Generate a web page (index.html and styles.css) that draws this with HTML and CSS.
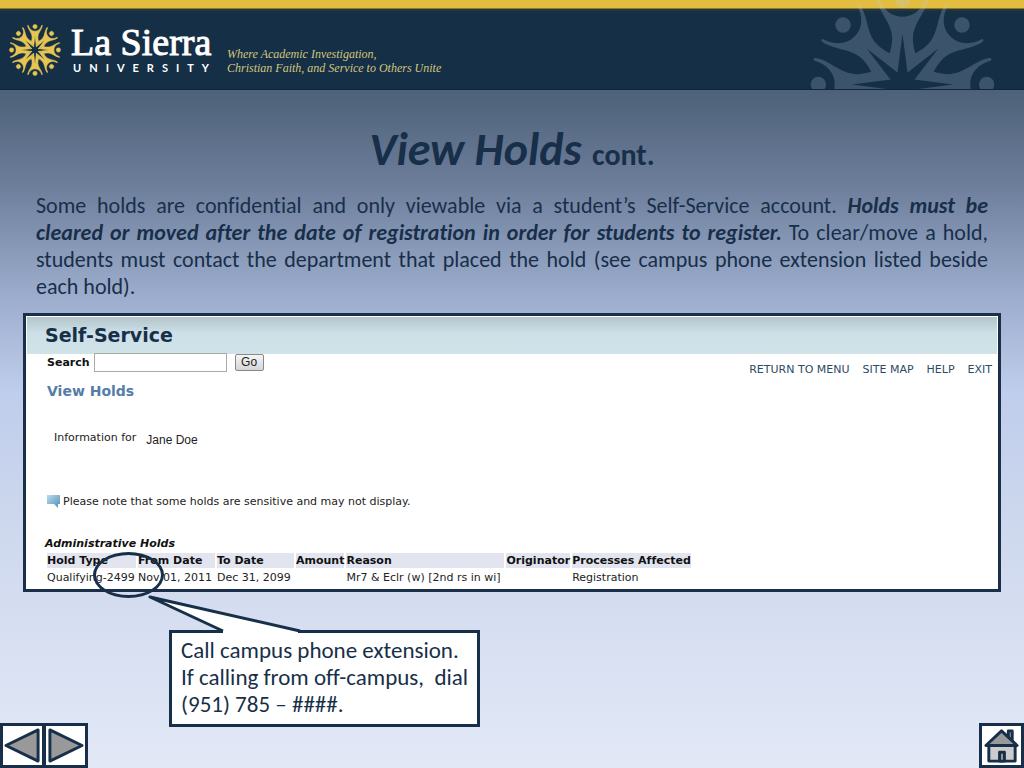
FILE: index.html
```html
<!DOCTYPE html>
<html lang="en">
<head>
<meta charset="UTF-8">
<meta name="viewport" content="width=device-width, initial-scale=1.0">
<title>View Holds</title>
<link rel="stylesheet" href="styles.css">
</head>
<body>
<!-- Shared shapes for the university seal -->
<svg class="defs" aria-hidden="true">
  <defs>
    <g id="figure">
      <circle cx="0" cy="-252" r="23"/>
      <path d="M-72 -265 C-60 -225 -34 -203 0 -203 C34 -203 60 -225 72 -265 Q80 -270 79 -258 C70 -215 32 -185 31 -140 C31 -120 35 -105 39 -92 L15 -35 L0 -152 L-15 -35 L-39 -92 C-35 -105 -31 -120 -31 -140 C-32 -185 -70 -215 -79 -258 Q-80 -270 -72 -265 Z"/>
    </g>
    <g id="seal">
      <use href="#figure"/>
      <use href="#figure" transform="rotate(45)"/>
      <use href="#figure" transform="rotate(90)"/>
      <use href="#figure" transform="rotate(135)"/>
      <use href="#figure" transform="rotate(180)"/>
      <use href="#figure" transform="rotate(225)"/>
      <use href="#figure" transform="rotate(270)"/>
      <use href="#figure" transform="rotate(315)"/>
    </g>
  </defs>
</svg>

<header class="header">
  <svg class="logo" viewBox="-280 -280 560 560"><use href="#seal"/></svg>
  <div class="brand">
    <div class="brand-name">La Sierra</div>
    <div class="brand-sub">UNIVERSITY</div>
  </div>
  <p class="motto">Where Academic Investigation,<br>Christian Faith, and Service to Others Unite</p>
  <svg class="watermark" viewBox="-280 -280 560 560"><use href="#seal"/></svg>
</header>

<main class="main">
  <h1 class="title"><em>View Holds</em> <small>cont.</small></h1>
  <p class="intro">Some holds are confidential and only viewable via a student’s Self-Service account. <em>Holds must be cleared&nbsp;or moved after the date of registration in order for students to register.</em> To clear/move a hold, students must contact the department that placed the hold (see campus phone extension listed beside each&nbsp;hold).</p>

  <section class="panel">
    <h2 class="banner">Self-Service</h2>
    <div class="toolbar">
      <form class="search">
        <label for="search">Search</label>
        <input type="text" id="search">
        <button type="button">Go</button>
      </form>
      <nav class="links">
        <a href="#">RETURN TO MENU</a>
        <a href="#">SITE MAP</a>
        <a href="#">HELP</a>
        <a href="#">EXIT</a>
      </nav>
    </div>
    <h3 class="page-name">View Holds</h3>
    <p class="student">Information for <span>Jane Doe</span></p>
    <p class="note">
      <svg width="14" height="13" viewBox="0 0 14 13">
        <defs>
          <linearGradient id="bubble" x1="0" y1="0" x2="1" y2="1">
            <stop offset="0" stop-color="#b9dcec"/>
            <stop offset="1" stop-color="#4f8fb8"/>
          </linearGradient>
        </defs>
        <path d="M0 0 H13 V9 H11 V13 L7 9 H0 Z" fill="url(#bubble)"/>
      </svg>
      Please note that some holds are sensitive and may not display.
    </p>
    <table class="holds">
      <caption>Administrative Holds</caption>
      <thead>
        <tr>
          <th class="col-type">Hold Type</th>
          <th class="col-date">From Date</th>
          <th class="col-date">To Date</th>
          <th>Amount</th>
          <th class="col-reason">Reason</th>
          <th>Originator</th>
          <th>Processes Affected</th>
        </tr>
      </thead>
      <tbody>
        <tr>
          <td>Qualifying-2499</td>
          <td>Nov 01, 2011</td>
          <td>Dec 31, 2099</td>
          <td></td>
          <td>Mr7 &amp; Eclr (w) [2nd rs in wi]</td>
          <td></td>
          <td>Registration</td>
        </tr>
      </tbody>
    </table>
    <div class="ring"></div>
  </section>
</main>

<footer class="footer">
  <nav class="pager">
    <a href="#" class="nav-btn" aria-label="Previous">
      <svg viewBox="0 0 40 40"><path d="M3 20 L36 4 V36 Z"/></svg>
    </a>
    <a href="#" class="nav-btn" aria-label="Next">
      <svg viewBox="0 0 40 40"><path d="M37 20 L4 4 V36 Z"/></svg>
    </a>
  </nav>
  <div class="callout">
    <svg class="tail" width="154" height="39" viewBox="0 0 154 39">
      <path class="tail-fill" d="M75 39 V36 L2 2 L150 36 V39 Z"/>
      <path class="tail-line" d="M75 36 L2 2 L152 36"/>
    </svg>
    Call campus phone extension.<br>
    If calling from off-campus,&nbsp; dial<br>
    (951) 785 – ####.
  </div>
  <a href="#" class="nav-btn home" aria-label="Home">
    <svg viewBox="0 0 40 40">
      <path d="M27 12 V5 H31 V16 Z"/>
      <path class="wall" d="M7 20 V36 H34 V20"/>
      <path d="M4 20 L20 5 L36 20 Z"/>
      <path d="M18 36 V27 H23 V36 Z"/>
    </svg>
  </a>
</footer>
</body>
</html>
```

FILE: styles.css
```css
* {
  box-sizing: border-box;
}

body {
  margin: 0;
  min-height: 100vh;
  display: flex;
  flex-direction: column;
  font-family: Carlito, Lato, sans-serif;
  font-variant-ligatures: none;
  color: #172f49;
  background: linear-gradient(#455a70 0, #4d6178 90px, #6b7c99 180px, #9aaaca 290px, #bfcdec 390px, #cfd9ee 540px, #e2e8f6 100%);
}

p, h1, h2, h3 {
  margin: 0;
}

.defs {
  position: absolute;
  width: 0;
  height: 0;
}

/* Header */
.header {
  position: relative;
  overflow: hidden;
  height: 90px;
  padding: 11px 9px 0;
  display: flex;
  align-items: flex-start;
  background: linear-gradient(#e3bd40 0, #e3bd40 8px, #2f3a2c 9px, #152f46 12px);
  border-bottom: 1px solid #10263b;
}

.logo {
  width: 52px;
  height: 52px;
  margin-top: 13px;
  fill: #e6c552;
  stroke: #e6c552;
  stroke-width: 6;
}

.brand {
  margin: 12px 10px 0 10px;
  color: #fff;
}

.brand-name {
  font: 38px/39px "Liberation Serif", serif;
  -webkit-text-stroke: 1px #fff;
}

.brand-sub {
  padding-left: 2px;
  font: bold 11px/12px Lato, sans-serif;
  letter-spacing: 8px;
}

.motto {
  margin-top: 36px;
  font: italic 12px/14px "Liberation Serif", serif;
  color: #d3c67c;
}

.watermark {
  position: absolute;
  top: -9px;
  right: 28px;
  width: 187px;
  height: 187px;
  fill: #b8d0e8;
  opacity: 0.23;
}

/* Slide text */
.main {
  padding: 32px 23px 0;
}

.title {
  text-align: center;
  font-size: 46px;
  line-height: 54px;
}

.title small {
  font-size: 30px;
  line-height: 30px;
}

.intro {
  padding: 16px 13px 13px;
  font-size: 22px;
  line-height: 27px;
  text-align: justify;
}

.intro em {
  font-weight: bold;
}

/* Self-Service panel */
.panel {
  position: relative;
  height: 279px;
  border: 3px solid #1b2f4b;
  background: #fff;
  font-family: "DejaVu Sans", sans-serif;
  font-size: 11px;
  line-height: 15px;
  color: #222;
}

.banner {
  margin: 1px 1px 0;
  padding-left: 18px;
  font-size: 19px;
  line-height: 37px;
  color: #172f49;
  background: linear-gradient(#b3c5cb, #cde0e7 16px, #d0e3e9);
}

.toolbar {
  display: flex;
  justify-content: space-between;
  padding: 0 6px 0 21px;
}

.search {
  display: flex;
  align-items: center;
  height: 17px;
  font-weight: bold;
  color: #111;
}

.search input {
  width: 133px;
  height: 19px;
  margin: 0 8px 0 4px;
  border: 1px solid #aaa;
}

.search button {
  width: 29px;
  height: 17px;
  padding: 0;
  border: 1px solid #888;
  border-radius: 2px;
  background: linear-gradient(#f5f5f5, #d5d5d5);
  font: 12px/15px "Liberation Sans", sans-serif;
  color: #222;
}

.links {
  display: flex;
  gap: 13px;
  padding-top: 8px;
}

.links a {
  color: #2f4a66;
  text-decoration: none;
}

.page-name {
  padding: 5px 21px 0;
  font-size: 14px;
  line-height: 18px;
  color: #557da8;
}

.student {
  display: flex;
  align-items: flex-start;
  gap: 10px;
  padding: 30px 28px 0;
}

.student span {
  padding-top: 3px;
  font: 12px/15px "Liberation Sans", sans-serif;
}

.note {
  display: flex;
  align-items: center;
  gap: 2px;
  padding: 46px 21px 0;
}

.holds {
  margin: 27px 19px 0;
  border-spacing: 2px;
  white-space: nowrap;
}

.holds caption {
  text-align: left;
  font-weight: bold;
  font-style: italic;
  color: #111;
}

.holds th,
.holds td {
  padding: 0;
  text-align: left;
}

.holds th {
  background: #e2e5ef;
  color: #111;
}

.holds .col-type {
  min-width: 89px;
}

.holds .col-date {
  min-width: 77px;
}

.holds .col-reason {
  min-width: 158px;
}

.ring {
  position: absolute;
  left: 67px;
  top: 236px;
  width: 71px;
  height: 46px;
  border: 3px solid #172f49;
  border-radius: 50%;
}

/* Bottom row */
.footer {
  flex: 1;
  display: flex;
  align-items: flex-end;
}

.pager {
  display: flex;
}

.nav-btn {
  width: 45px;
  height: 45px;
  border: 3px solid #172f49;
  background: #fff;
}

.pager .nav-btn + .nav-btn {
  margin-left: -2px;
}

.nav-btn svg {
  display: block;
  width: 100%;
  height: 100%;
  fill: #999;
  stroke: #172f49;
  stroke-width: 3;
  stroke-linejoin: round;
}

.nav-btn .wall {
  fill: #ccc;
}

.callout {
  position: relative;
  align-self: flex-start;
  margin: 38px 0 0 81px;
  padding: 4px 9px 6px;
  border: 3px solid #172f49;
  background: #fff;
  font-size: 23px;
  line-height: 27px;
}

.tail {
  position: absolute;
  left: -24px;
  top: -38px;
}

.tail-fill {
  fill: #fff;
}

.tail-line {
  fill: none;
  stroke: #172f49;
  stroke-width: 3;
  stroke-linejoin: round;
}

.home {
  margin-left: auto;
}
```
